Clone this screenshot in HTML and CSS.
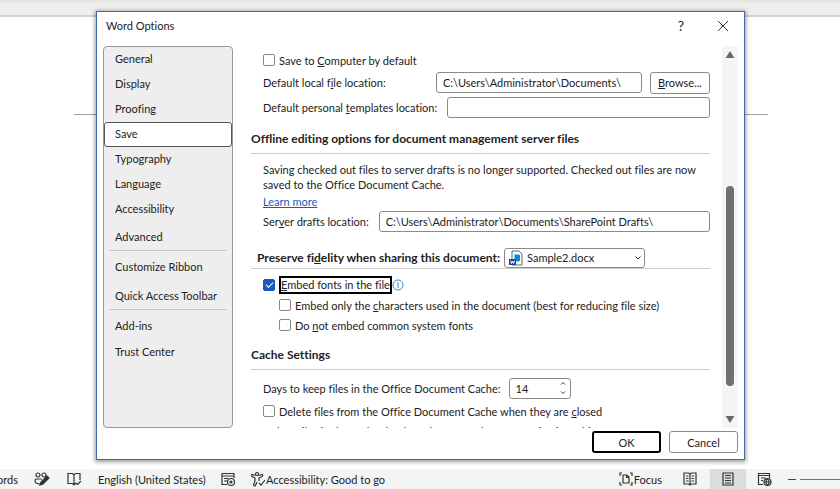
FILE: index.html
```
<!DOCTYPE html>
<html lang="en">
<head>
  <meta charset="UTF-8" />
  <meta name="viewport" content="width=device-width, initial-scale=1.0"/>
  <title>Word Options</title>
  <link rel="stylesheet" href="styles.css">
</head>
<body>

  <div class="ribbon"></div>
  <main class="workspace">
    <div class="page-line"></div>
  </main>

  <footer class="statusbar">
    <span class="words">ords</span>
    <svg class="icon editor" viewBox="0 0 16 16"><circle cx="4" cy="4" r="2"/><circle cx="10" cy="4" r="2"/><path d="M8 8H2.500Q1 8 1 9.500 1 13 6 13"/><path class="solid" d="M6 14l1-3 6-6 2 2-6 6z"/></svg>
    <svg class="icon proof" viewBox="0 0 16 16"><path d="M8 13V4L6.500 2.500H2v10h4.500L8 14l2-2M8 4l1.500-1.500H14V9M10 12l1.500 1.500L15 10"/></svg>
    <span class="lang">English (United States)</span>
    <svg class="icon macro" viewBox="0 0 16 16"><path d="M7 13.500H2v-11h12V7M2 5h12M4 7.500h4M4 10h3"/><circle cx="11" cy="11" r="3.500"/><circle class="solid" cx="11" cy="11" r="1"/></svg>
    <svg class="icon access" viewBox="0 0 16 16"><circle cx="7" cy="3" r="1.500"/><path d="M5.500 4.500L2 3.500Q1 5 2 5.500l3 1.500v3l-1.500 4q1 1.500 2 .5L7 11M8.500 4.500l3.500-1q1.500 1 0 2L9 7v3M9 12l2 2 4-5"/></svg>
    <span class="good">Accessibility: Good to go</span>
    <svg class="icon focus" viewBox="0 0 16 16"><path d="M4 2H2v3M12 2h2v3M4 14H2v-3M12 14h2v-3M5 4h4l2 2v6H5zM8.500 4v2.500H11"/></svg>
    <span class="focus-text">Focus</span>
    <svg class="icon read" viewBox="0 0 16 16"><path d="M8 3v11M8 3L6.500 2H2v11h4.500L8 14l1.500-1H14V2H9.500zM4 5h2.500M4 7.500h2.500M4 10h2.500M9.500 5H12M9.500 7.500H12M9.500 10H12"/></svg>
    <span class="view-on"><svg class="icon" viewBox="0 0 16 16"><path d="M3 2h10v12H3zM5 4.500h6M5 7h6M5 9.500h6M5 12h6"/></svg></span>
    <svg class="icon web" viewBox="0 0 16 16"><path d="M7 13.500H2.500v-11h11V7M2.500 4.500h11M5 7h5M5 9.500h2"/><circle cx="11.500" cy="11" r="3.500"/><path d="M8 11h7M11.500 7.500q-3 3.500 0 7M11.500 7.500q3 3.500 0 7"/></svg>
    <span class="zoom-minus"></span>
    <span class="zoom-track"></span>
  </footer>

  <section class="dialog" role="dialog" aria-labelledby="title">
    <header class="titlebar">
      <h1 id="title">Word Options</h1>
      <button class="help" aria-label="Help">?</button>
      <button class="close" aria-label="Close"><svg viewBox="0 0 10 10"><path d="M0 0l10 10M10 0L0 10"/></svg></button>
    </header>

    <div class="main">
      <nav class="sidebar">
        <a href="#">General</a>
        <a href="#">Display</a>
        <a href="#">Proofing</a>
        <a href="#" class="active">Save</a>
        <a href="#">Typography</a>
        <a href="#">Language</a>
        <a href="#">Accessibility</a>
        <a href="#" class="group-end">Advanced</a>
        <hr>
        <a href="#" class="group-start">Customize Ribbon</a>
        <a href="#" class="group-end">Quick Access Toolbar</a>
        <hr>
        <a href="#" class="group-start">Add-ins</a>
        <a href="#">Trust Center</a>
      </nav>

      <div class="content">
        <div class="row check">
          <input type="checkbox" id="saveLocal"><label for="saveLocal">Save to <u>C</u>omputer by default</label>
        </div>
        <div class="row field">
          <label for="localPath">Default local f<u>i</u>le location:</label>
          <input type="text" id="localPath" class="local" value="C:\Users\Administrator\Documents\">
          <button class="browse"><u>B</u>rowse...</button>
        </div>
        <div class="row field">
          <label for="templates">Default personal <u>t</u>emplates location:</label>
          <input type="text" id="templates" class="grow">
        </div>

        <h2>Offline editing options for document management server files</h2>
        <p>Saving checked out files to server drafts is no longer supported. Checked out files are now saved to the Office Document Cache.</p>
        <a href="#" class="learn">Learn more</a>
        <div class="row field">
          <label for="drafts">Ser<u>v</u>er drafts location:</label>
          <input type="text" id="drafts" class="grow" value="C:\Users\Administrator\Documents\SharePoint Drafts\">
        </div>

        <div class="preserve">
          <label for="doc">Preserve fi<u>d</u>elity when sharing this document:</label>
          <div class="select">
            <svg class="doc-icon" viewBox="0 0 14 16"><path class="sheet" d="M3 1h7l3 3v11H3z"/><path class="light" d="M5 4h5v8H5z"/><path class="blue" d="M6 5h5v6H6z"/><path class="badge" d="M0 9h7v6H0z"/><path class="w" d="M1.500 10.500l1 3 1-2.500 1 2.500 1-3"/></svg>
            <select id="doc"><option>Sample2.docx</option></select>
            <svg class="chevron" viewBox="0 0 8 6"><path d="M1.500 1.500L4 4l2.500-2.500"/></svg>
          </div>
        </div>
        <div class="row check embed">
          <input type="checkbox" id="embed" checked><label for="embed" class="focused"><u>E</u>mbed fonts in the file</label>
          <svg class="info" viewBox="0 0 12 12"><circle cx="6" cy="6" r="5"/><path d="M6 3v6"/></svg>
        </div>
        <div class="row check sub">
          <input type="checkbox" id="chars"><label for="chars">Embed only the <u>c</u>haracters used in the document (best for reducing file size)</label>
        </div>
        <div class="row check sub">
          <input type="checkbox" id="common"><label for="common">Do <u>n</u>ot embed common system fonts</label>
        </div>

        <h2 class="cache">Cache Settings</h2>
        <div class="row field">
          <label for="days">Days to keep files in the Office Document Cache:</label>
          <div class="spinner">
            <input type="text" id="days" value="14">
            <svg viewBox="0 0 8 16"><path d="M2 4.500l2-2 2 2M2 11.500l2 2 2-2"/></svg>
          </div>
        </div>
        <div class="row check delete">
          <input type="checkbox" id="del"><label for="del">Delete files from the Office Document Cache when they are <u>c</u>losed</label>
        </div>
        <p class="cut">Delete files in the cache that have been saved for faster viewing. This</p>
      </div>

      <div class="scrollbar">
        <svg viewBox="0 0 10 8"><path d="M5 0l5 8H0z"/></svg>
        <div class="thumb"></div>
        <svg viewBox="0 0 10 8"><path d="M0 0h10L5 8z"/></svg>
      </div>
    </div>

    <div class="actions">
      <button class="ok">OK</button>
      <button>Cancel</button>
    </div>
  </section>

</body>
</html>
```

FILE: styles.css
```
* { box-sizing: border-box; }
body {
  margin: 0; height: 100vh; overflow: hidden;
  display: flex; flex-direction: column;
  background: #fff; color: #222;
  font: 11px/15px Lato, "Open Sans", sans-serif;
  font-variant-ligatures: none;
}
button, input, select { font: inherit; color: inherit; font-variant-ligatures: none; }
.ribbon {
  height: 17px; flex: none; border-bottom: 2px solid #d2d2d2;
  background: linear-gradient(#e2e2e2, #eee 4px);
}
.workspace { flex: 1; padding: 97px 72px 0 74px; }
.page-line { border-top: 1px solid #a0a0a0; }

/* status bar */
.statusbar {
  height: 20px; flex: none; display: flex; align-items: center;
  background: #f4f4f4; white-space: nowrap;
}
.icon { width: 16px; height: 16px; flex: none; fill: none; stroke: #333; stroke-width: 1.2; }
.icon .solid { fill: #333; }
.words { width: 18px; display: flex; justify-content: flex-end; }
.editor { margin-left: 16px; }
.proof { margin-left: 16px; }
.lang { width: 108px; margin-left: 16px; }
.macro { margin-left: 14px; }
.access { margin-left: 14px; }
.focus { margin-left: auto; }
.read { margin-left: 20px; }
.view-on {
  width: 36px; height: 20px; margin-left: 12px;
  display: flex; align-items: center; justify-content: center; background: #dcdcdc;
}
.web { margin-left: 10px; }
.zoom-minus { width: 8px; margin-left: 16px; border-top: 1px solid #444; }
.zoom-track { width: 40px; margin-left: 4px; border-top: 1px solid #777; }

/* dialog */
.dialog {
  position: absolute; top: 11px; left: 96px; right: 95px; bottom: 29px;
  display: flex; flex-direction: column;
  background: #fff; border: 1px solid #3a6ea8;
  box-shadow: 0 1px 4px 1px rgba(0, 0, 0, .4);
}
.titlebar { height: 34px; flex: none; display: flex; padding: 0 11px 7px 9px; align-items: center; }
h1 { flex: 1; margin: 0; font-size: 11px; font-weight: normal; }
.titlebar button { width: 20px; padding: 0; border: 0; background: none; font-size: 14px; }
.close { margin-left: 22px; }
.close svg { width: 10px; height: 10px; display: block; margin: auto; overflow: visible; fill: none; stroke: #333; }
.main { flex: 1; min-height: 0; display: flex; padding: 0 6px; }

.sidebar {
  width: 130px; flex: none; display: flex; flex-direction: column;
  background: #eee; border: 1px solid #999; border-radius: 4px;
}
.sidebar a {
  height: 25px; flex: none; padding: 0 11px; line-height: 24px;
  color: inherit; text-decoration: none; white-space: nowrap;
}
.sidebar .active { line-height: 22px; padding: 0 10px; background: #fff; border: 1px solid #555; border-radius: 3px; }
.sidebar .group-end { height: 28px; line-height: 30px; }
.sidebar .group-start { height: 30px; line-height: 32px; }
hr { width: 118px; margin: 0 auto; border: 0; border-top: 1px solid #c8c8c8; }

.content { flex: 1; min-width: 0; overflow: hidden; padding: 4px 0 0 18px; }
.row { display: flex; align-items: center; padding-left: 12px; white-space: nowrap; }
.check { height: 20px; gap: 4px; }
.sub { padding-left: 28px; }
.field { height: 25px; }
u { text-underline-offset: 1px; }
input[type="checkbox"] {
  appearance: none; width: 12px; height: 12px; flex: none; margin: 0;
  background: #fff; border: 1px solid #888; border-radius: 2px;
}
input[type="checkbox"]:checked { background: #185abd; border-color: #185abd; }
input[type="checkbox"]:checked::after {
  content: ""; display: block; width: 6px; height: 3px; margin: 2px 0 0 2px;
  border: solid #fff; border-width: 0 0 1px 1px; transform: rotate(-45deg);
}
input[type="text"] {
  height: 21px; min-width: 0; padding: 0 6px;
  background: #fff; border: 1px solid #8a8a8a; border-radius: 3px;
}
.local { width: 206px; margin-left: auto; }
.grow { flex: 1; margin-left: 10px; }
button { background: #fff; border: 1px solid #8a8a8a; border-radius: 3px; }
.browse { width: 60px; height: 22px; margin-left: 8px; padding: 0; }
h2 { margin: 11px 0 8px; padding-bottom: 6px; border-bottom: 1px solid #ccc; font-size: 12px; line-height: 16px; }
p { margin: 0 0 2px 12px; }
.learn { margin-left: 12px; color: #185abd; }
.preserve {
  display: flex; align-items: center; height: 22px; margin-top: 13px; padding-left: 6px;
  border-bottom: 1px solid #ccc; font-size: 12px; font-weight: bold; white-space: nowrap;
}
.select { position: relative; width: 141px; height: 20px; margin-left: 4px; font-size: 11px; font-weight: normal; }
.select select {
  appearance: none; width: 100%; height: 20px; padding: 0 22px;
  background: #fff; border: 1px solid #8a8a8a; border-radius: 3px;
}
.doc-icon { position: absolute; left: 5px; top: 2px; width: 14px; height: 16px; }
.sheet { fill: #fff; stroke: #666; }
.light { fill: #6cd0f7; }
.blue { fill: #1681dc; }
.badge { fill: #183fa0; }
.w { fill: none; stroke: #fff; }
.chevron { position: absolute; right: 3px; top: 7px; width: 8px; height: 6px; fill: none; stroke: #333; }
.embed { margin-top: 6px; }
.embed .focused { border: 2px solid #000; line-height: 14px; }
.info { width: 12px; height: 12px; margin-left: -4px; fill: none; stroke: #2b8fc9; }
.cache { margin: 12px 0 6px; }
.spinner { position: relative; width: 62px; height: 21px; margin-left: 8px; }
.spinner input { display: block; width: 100%; }
.spinner svg { position: absolute; right: 4px; top: 2px; width: 8px; height: 16px; fill: none; stroke: #333; }
.cut { margin-top: 3px; }

.scrollbar {
  width: 16px; flex: none; margin-left: 12px; padding: 5px 0;
  display: flex; flex-direction: column; align-items: center;
  background: #f5f5f5;
}
.scrollbar svg { width: 10px; height: 7px; fill: #666; }
.thumb { width: 8px; height: 200px; margin: 128px 0 auto; border-radius: 4px; background: #707070; }
.actions { flex: none; display: flex; justify-content: flex-end; gap: 8px; padding: 3px 6px 6px; }
.actions button { width: 69px; height: 22px; padding: 0; }
.actions .ok { border: 2px solid #000; }
```
